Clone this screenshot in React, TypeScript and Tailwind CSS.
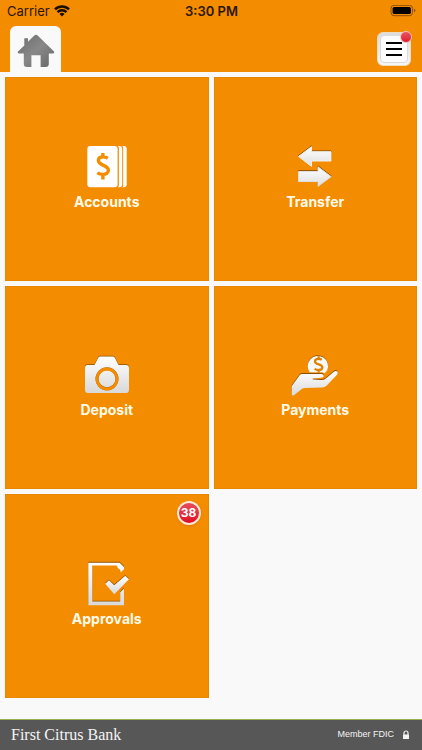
import type { ReactNode } from "react";

const ORANGE = "#f48c00";

type Tile = {
  label: string;
  icon: ReactNode;
  badge?: number;
};

const AccountsIcon = () => (
  <svg viewBox="0 0 48 48" className="size-12" aria-hidden="true">
    <rect x="10" y="4" width="33.7" height="41.2" rx="3" fill="#fff" />
    <rect x="7" y="3" width="33.2" height="43.2" rx="3.5" fill={ORANGE} />
    <rect x="7" y="4" width="32.2" height="41.2" rx="3" fill="#fff" />
    <rect x="3" y="3" width="32.9" height="43.2" rx="3.5" fill={ORANGE} />
    <rect x="4.3" y="4" width="30.3" height="41.2" rx="3" fill="#fff" />
    <path
      d="M24.8 16.2c-1.4-.9-3-1.3-4.7-1.3-2.9 0-4.7 1.4-4.7 3.7 0 5.2 10 4.3 10 9.5 0 2.6-2.1 4.3-5.3 4.3-2.2 0-4.2-.5-5.8-1.5M19.9 11v4M19.9 32.2v5.4"
      fill="none"
      stroke={ORANGE}
      strokeWidth="3.4"
    />
  </svg>
);

const TransferIcon = () => (
  <svg viewBox="0 0 48 48" className="size-12" aria-hidden="true">
    <defs>
      <linearGradient id="transfer" x1="0" y1="0" x2="0" y2="1">
        <stop offset="0" stopColor="#fff" />
        <stop offset="1" stopColor="#e0dfde" />
      </linearGradient>
    </defs>
    <g strokeLinejoin="round">
      <g fill="#8d5000" stroke="#8d5000" transform="translate(0 -.8)">
        <path d="M7.5 14.5 20.5 4.7V9.7H40V19H20.5V24.4Z" />
        <path d="M7.5 29.5H27V24.8L40.2 34.7 27 44.3V39.5H7.5Z" />
      </g>
      <g fill="url(#transfer)" stroke="#f1f0ef">
        <path d="M7.5 14.5 20.5 4.7V9.7H40V19H20.5V24.4Z" />
        <path d="M7.5 29.5H27V24.8L40.2 34.7 27 44.3V39.5H7.5Z" stroke="#dededd" />
      </g>
    </g>
  </svg>
);

const DepositIcon = () => (
  <svg viewBox="0 0 48 48" className="size-12" aria-hidden="true">
    <defs>
      <linearGradient id="deposit" x1="0" y1="0" x2="0" y2="1">
        <stop offset="0" stopColor="#fff" />
        <stop offset="1" stopColor="#d9d9d9" />
      </linearGradient>
    </defs>
    <path
      d="M4.5 15H11.5L15.2 7.7Q15.9 6.4 17.4 6.4H29.6Q31.1 6.4 31.8 7.7L35.5 15H43Q46 15 46 18V40Q46 43 43 43H5Q2 43 2 40V18Q2 15 4.5 15Z"
      fill="#8d5000"
      transform="translate(0 -.7)"
    />
    <path
      d="M4.5 15H11.5L15.2 7.7Q15.9 6.4 17.4 6.4H29.6Q31.1 6.4 31.8 7.7L35.5 15H43Q46 15 46 18V40Q46 43 43 43H5Q2 43 2 40V18Q2 15 4.5 15Z"
      fill="url(#deposit)"
    />
    <circle cx="24" cy="28.8" r="10" fill="none" stroke="#a96200" strokeWidth="3" />
    <circle cx="24" cy="29" r="10" fill="none" stroke={ORANGE} strokeWidth="2.8" />
  </svg>
);

const HAND =
  "M.8 36 8.8 25Q9.6 24 11 24H30Q32.8 24 32.6 26.2 32.4 27.6 30 27.7L21.5 28.4 22 29.6 30 29.9Q33 30 34.5 28.7L43.2 21.4Q45 20.4 46.4 21.6 47.4 23 46 24.7L35.5 35.7Q33.8 37.4 31 37.5L14 37.9Q12 38 10.8 39L3 45.2Q1.4 46.2.7 44.6Z";

const PaymentsIcon = () => (
  <svg viewBox="0 0 48 48" className="size-12" aria-hidden="true">
    <defs>
      <linearGradient id="payments" x1="0" y1="0" x2="0" y2="1">
        <stop offset="0" stopColor="#fff" />
        <stop offset="1" stopColor="#d9d9d9" />
      </linearGradient>
    </defs>
    <path
      d="M18.7 22.3A10.2 10.2 0 1 1 36.2 20.2 L33.7 23.2 31 22.3Z"
      fill="#8d5000"
      transform="translate(0 -.8)"
    />
    <path d="M18.7 22.3A10.2 10.2 0 1 1 36.2 20.2 L33.7 23.2 31 22.3Z" fill="#f8f8f7" />
    <path
      d="M30.8 9.7C29.7 9 28.7 8.8 27.4 8.8 25.3 8.8 24 9.8 24 11.4 24 15 31.3 13.8 31.3 17.2 31.3 19 29.7 20 27.6 20 26.1 20 24.7 19.6 23.6 18.9M27.6 6.3V9M27.6 19.8V22.4"
      fill="none"
      stroke="#e07f00"
      strokeWidth="2.3"
    />
    <path d={HAND} fill="#8d5000" transform="translate(0 -.9)" />
    <path d={HAND} fill="url(#payments)" />
  </svg>
);

const FORM =
  "M5.3 3.7H36.6L41 8V10.3L37.6 13.6Q37.6 10 35.2 9.4L33.6 6.6H9.3V42.6H37.2V33.2L41 29.4V46.2H5.3Z";
const CHECK = "M22.2 24.7 26 21.3 31.2 26.2 42.3 16.8 46 20.3 31.3 35.2Z";

const ApprovalsIcon = () => (
  <svg viewBox="0 0 48 48" className="size-12" aria-hidden="true">
    <defs>
      <linearGradient id="approvals" x1="0" y1="0" x2="0" y2="1">
        <stop offset="0" stopColor="#fff" />
        <stop offset="1" stopColor="#d9d9d9" />
      </linearGradient>
    </defs>
    <g fill="#8d5000" transform="translate(0 -.9)">
      <path d={FORM} />
      <path d={CHECK} />
    </g>
    <path d={FORM} fill="url(#approvals)" />
    <path d={CHECK} fill="url(#approvals)" />
  </svg>
);

const tiles: Tile[] = [
  { label: "Accounts", icon: <AccountsIcon /> },
  { label: "Transfer", icon: <TransferIcon /> },
  { label: "Deposit", icon: <DepositIcon /> },
  { label: "Payments", icon: <PaymentsIcon /> },
  { label: "Approvals", icon: <ApprovalsIcon />, badge: 38 },
];

const StatusBar = () => (
  <div className="grid h-[22px] grid-cols-3 items-center pr-1.5 pl-[7px] text-[13px] leading-[22px] text-[#2b1600]">
    <div className="flex items-center gap-1">
      <span>Carrier</span>
      <svg viewBox="0 0 16 12" className="h-3 w-4" aria-hidden="true">
        <g fill="none" stroke="#1c0e00" strokeWidth="2.4">
          <path d="M1 4.4A9.9 9.9 0 0 1 15 4.4" />
          <path d="M3.5 7.2A6.3 6.3 0 0 1 12.5 7.2" />
        </g>
        <path d="M5.5 9.1A3.5 3.5 0 0 1 10.5 9.1L8 11.6Z" fill="#1c0e00" />
      </svg>
    </div>
    <span className="text-center font-semibold">3:30 PM</span>
    <svg viewBox="0 0 26 12" className="h-3 w-[26px] justify-self-end" aria-hidden="true">
      <rect x="1" y=".3" width="21.5" height="10.4" rx="3" fill="none" stroke="#8a5000" />
      <rect x="2.6" y="1.9" width="18.3" height="7.2" rx="1.6" fill="#000" />
      <path d="M24 3.7Q25.4 4.3 25.4 5.5T24 7.3Z" fill="#8a5000" />
    </svg>
  </div>
);

const Header = () => (
  <header className="bg-[#f48c00]">
    <StatusBar />
    <div className="flex items-end justify-between pt-1 pr-[11px] pl-2.5">
      <a
        href="#home"
        aria-label="Home"
        className="flex h-[46px] w-[51px] items-center justify-center rounded-t-md bg-[#f9f9f9]"
      >
        <svg viewBox="0 0 38 34" className="mt-1 h-[34px] w-[38px]" aria-hidden="true">
          <defs>
            <linearGradient id="home" x1="0" y1="0" x2="1" y2="1">
              <stop offset="0" stopColor="#6c6c6c" />
              <stop offset=".5" stopColor="#888" />
              <stop offset="1" stopColor="#666" />
            </linearGradient>
          </defs>
          <path
            d="M17.3 1.5Q19 .2 20.7 1.5L37 17.6Q37.9 19.5 36 19.5H31.8V29.8Q31.8 33 28.6 33H23.6V21.2H14.4V33H9.8Q6.8 33 6.8 29.8V19.5H2Q.1 19.5 1 17.6L7.3 11.5V4.2H11V7.8Z"
            fill="url(#home)"
          />
        </svg>
      </a>
      <button
        type="button"
        aria-label="Menu"
        className="relative mb-1.5 flex size-[34px] items-center justify-center rounded-md border border-[#ecdcc2] bg-linear-to-b from-[#dcdcdc] to-[#f6f6f6]"
      >
        <span className="flex size-7 flex-col items-center justify-center gap-1 rounded-sm border border-[#dadada] bg-[#fcfcfc]">
          <span className="h-0.5 w-4 bg-black" />
          <span className="h-0.5 w-4 bg-black" />
          <span className="h-0.5 w-4 bg-black" />
        </span>
        <span className="absolute -top-0.5 -right-0.5 size-3 rounded-full border border-[#f3c0bc] bg-linear-to-b from-[#e85260] to-[#dc1730]" />
      </button>
    </div>
  </header>
);

const MenuTile = ({ label, icon, badge }: Tile) => (
  <a
    href={`#${label.toLowerCase()}`}
    className="relative flex aspect-square flex-col items-center justify-center border border-[#e58700] bg-[#f48c00] pb-1 text-sm leading-5 font-bold text-[#fffbe9]"
  >
    {icon}
    <span className="mt-0.5">{label}</span>
    {badge !== undefined && (
      <span className="absolute top-1.5 right-[7px] flex size-6 items-center justify-center rounded-full border-2 border-[#ffe9d6] bg-linear-to-b from-[#e54a5c] to-[#e00020] text-xs text-white shadow">
        {badge}
      </span>
    )}
  </a>
);

const Footer = () => (
  <footer className="flex h-[31px] items-center justify-between border-t border-[#98b04c] bg-[#575757] pr-3 pl-[11px] text-[#f4f4f4]">
    <span className="font-['Liberation_Serif',serif] text-base">First Citrus Bank</span>
    <span className="flex items-center gap-2 font-['Liberation_Sans',sans-serif] text-[9px]">
      Member FDIC
      <svg viewBox="0 0 8 10" className="h-2.5 w-2" aria-hidden="true">
        <path d="M2 5V3A2 2 0 0 1 6 3V5" fill="none" stroke="#f4f4f4" strokeWidth="1.2" />
        <rect x="1" y="4.5" width="6" height="4.5" rx=".5" fill="#f4f4f4" />
      </svg>
    </span>
  </footer>
);

export default function App() {
  return (
    <div className="flex min-h-screen flex-col bg-[#f9f9f9] font-['Inter',sans-serif]">
      <Header />
      <main className="grid flex-1 grid-cols-2 content-start gap-[5px] p-[5px]">
        {tiles.map((tile) => (
          <MenuTile key={tile.label} {...tile} />
        ))}
      </main>
      <Footer />
    </div>
  );
}
